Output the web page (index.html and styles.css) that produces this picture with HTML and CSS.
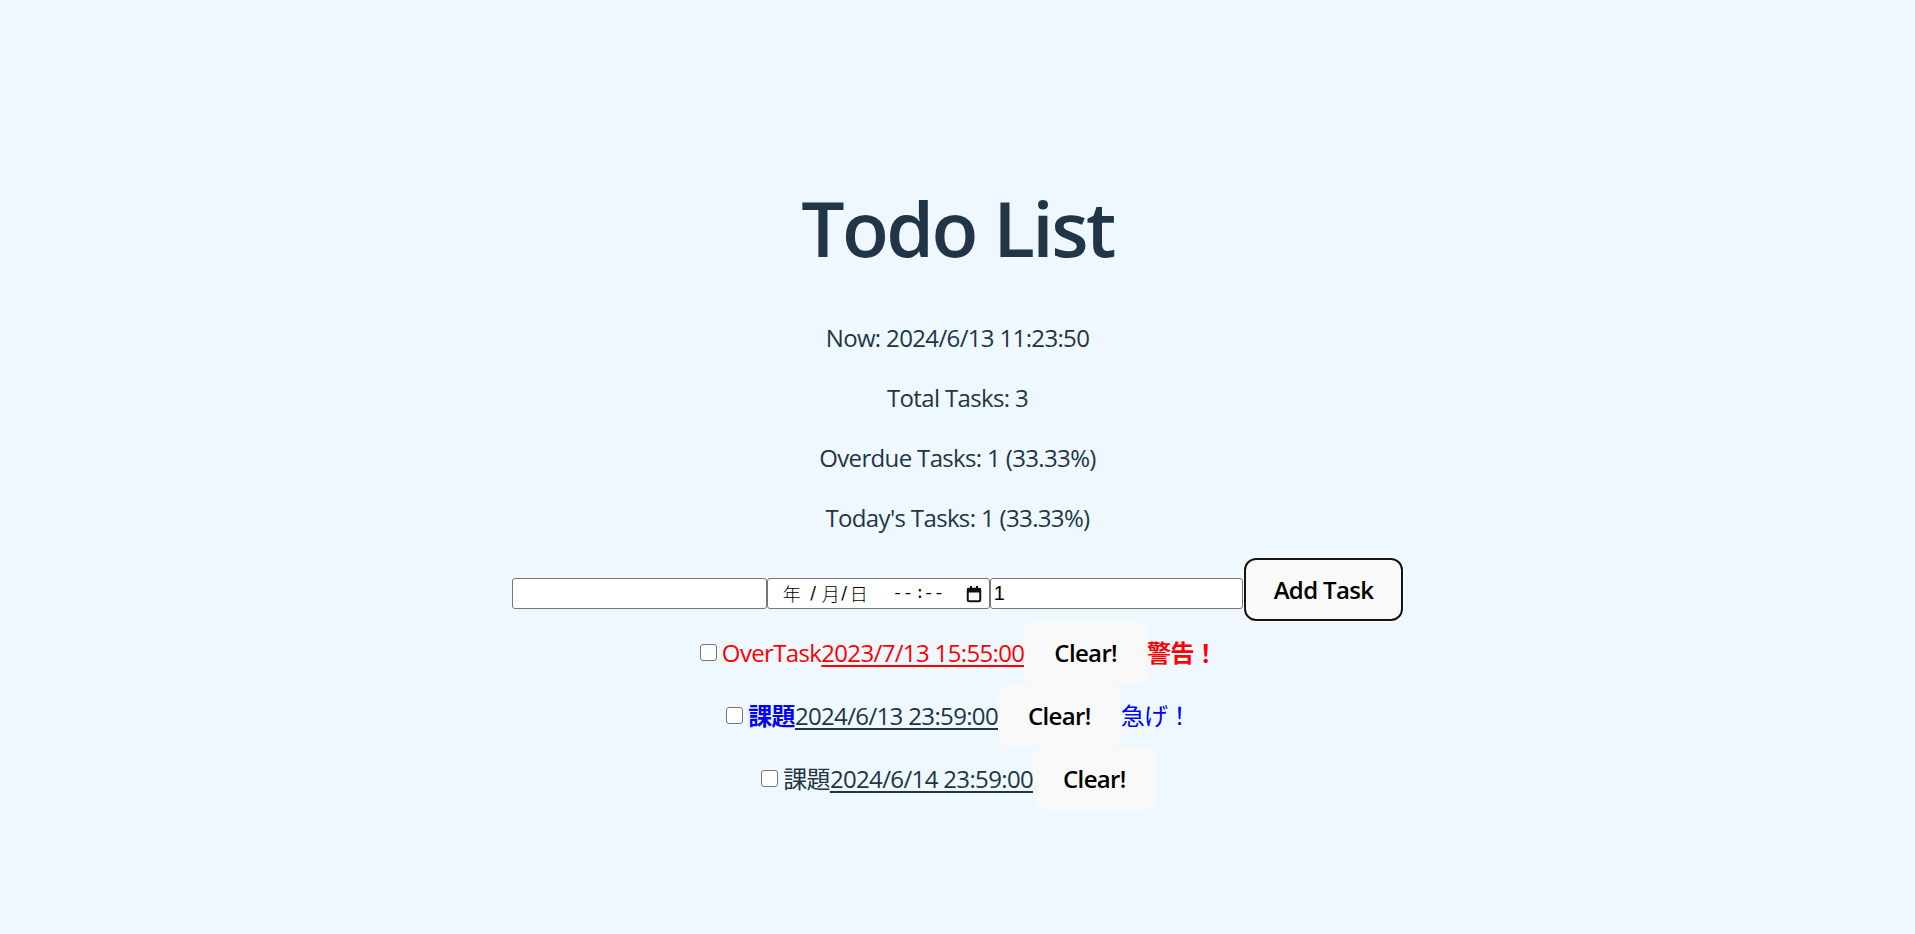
FILE: index.html
```html
<!DOCTYPE html>
<html lang="ja">
<head>
<meta charset="utf-8">
<title>Todo List</title>
<link rel="stylesheet" href="styles.css">
</head>
<body>
<div class="app">
  <h1 class="title">Todo List</h1>
  <p class="stat">Now: 2024/6/13 11:23:50</p>
  <p class="stat">Total Tasks: 3</p>
  <p class="stat">Overdue Tasks: 1 (33.33%)</p>
  <p class="stat">Today's Tasks: 1 (33.33%)</p>
  <div class="form-row">
    <input class="field field-text" type="text" value="">
    <div class="field field-date">
      <span class="seg seg-y">年</span><span class="seg seg-s1">/</span><span class="seg seg-m">月</span><span class="seg seg-s2">/</span><span class="seg seg-d">日</span><span class="seg seg-h">--</span><span class="seg seg-c">:</span><span class="seg seg-mi">--</span>
      <svg class="cal" width="16" height="18" viewBox="0 0 16 18"><rect x="1.75" y="3.75" width="12.5" height="12.5" rx="1.5" fill="none" stroke="#111" stroke-width="2"/><rect x="1" y="3" width="14" height="4.5" fill="#111"/><rect x="4" y="1" width="2" height="3" fill="#111"/><rect x="10" y="1" width="2" height="3" fill="#111"/></svg>
    </div>
    <input class="field field-num" type="text" value="1">
    <button class="btn btn-add" type="button">Add Task</button>
  </div>
  <div class="task-list">
    <div class="task task-over">
      <input class="check" type="checkbox">
      <span class="name">OverTask</span><span class="due">2023/7/13 15:55:00</span><button class="btn" type="button">Clear!</button><span class="note note-warn">警告！</span>
    </div>
    <div class="task task-today">
      <input class="check" type="checkbox">
      <span class="name name-bold">課題</span><span class="due">2024/6/13 23:59:00</span><button class="btn" type="button">Clear!</button><span class="note note-hurry">急げ！</span>
    </div>
    <div class="task task-later">
      <input class="check" type="checkbox">
      <span class="name">課題</span><span class="due">2024/6/14 23:59:00</span><button class="btn" type="button">Clear!</button>
    </div>
  </div>
</div>
</body>
</html>
```
FILE: styles.css
```css
html, body {
  margin: 0;
  padding: 0;
}
body {
  background: #f0f8ff;
  color: #213547;
  font-family: "Open Sans", "Noto Sans CJK JP", sans-serif;
  font-size: 24px;
  line-height: 36px;
  letter-spacing: -0.65px;
  min-height: 934px;
}
.app {
  text-align: center;
  padding-top: 186px;
}
.title {
  margin: 0 0 50px;
  font-size: 76.8px;
  line-height: 84px;
  font-weight: 600;
  letter-spacing: -2.6px;
}
.stat {
  margin: 0 0 24px;
}
.form-row {
  display: flex;
  justify-content: center;
  align-items: flex-start;
  height: 63px;
  margin-top: -2px;
}
.field {
  box-sizing: border-box;
  height: 31px;
  margin-top: 20px;
  border: 1px solid #767676;
  border-radius: 3px;
  background: #fff;
  font-family: "Liberation Sans", "Noto Sans CJK JP", sans-serif;
  font-size: 20px;
  letter-spacing: 0;
  color: #000;
  padding: 0 3px;
  outline: none;
}
.field-text {
  width: 255px;
}
.field-date {
  width: 223px;
  display: flex;
  align-items: center;
  padding: 0 7px 0 0;
  white-space: nowrap;
}
.seg {
  display: inline-block;
  flex: none;
  text-align: center;
  white-space: nowrap;
  font-family: "Noto Sans CJK JP", sans-serif;
  font-weight: 300;
  font-size: 18px;
  line-height: 29px;
  letter-spacing: 0;
  color: #000;
}
.seg-y { width: 18px; margin-left: 15px; }
.seg-s1 { width: 9px; margin-left: 8px; font-family: "DejaVu Sans", sans-serif; font-weight: 400; font-size: 17px; }
.seg-m { width: 18px; margin-left: 4px; }
.seg-s2 { width: 9px; margin-left: 0; font-family: "DejaVu Sans", sans-serif; font-weight: 400; font-size: 17px; }
.seg-d { width: 18px; margin-left: 1px; }
.seg-h { width: 22px; margin-left: 24px; font-family: "Liberation Mono", monospace; font-weight: 400; font-size: 17px; }
.seg-c { width: 6px; margin-left: 1px; font-family: "Liberation Mono", monospace; font-weight: 400; font-size: 17px; }
.seg-mi { width: 22px; margin-left: 2px; font-family: "Liberation Mono", monospace; font-weight: 400; font-size: 17px; }
.cal {
  display: block;
  flex: none;
  margin-left: auto;
}
.field-num {
  width: 253px;
}
.btn {
  box-sizing: border-box;
  height: 63px;
  padding: 0 29px;
  border: 1.5px solid transparent;
  border-radius: 12px;
  background: #f9f9f9;
  color: #000;
  font-family: "Open Sans", "Noto Sans CJK JP", sans-serif;
  font-size: 24px;
  font-weight: 600;
  letter-spacing: -0.65px;
  line-height: 30px;
  cursor: pointer;
}
.btn-add {
  margin-left: 1px;
  padding: 0 28px;
  border: 2.5px solid #151515;
  box-shadow: 0 0 0 1px #fff;
}
.task-list {
  display: flex;
  flex-direction: column;
}
.task {
  display: flex;
  justify-content: center;
  align-items: center;
  height: 63px;
  padding-right: 4px;
  white-space: nowrap;
}
.check {
  appearance: none;
  -webkit-appearance: none;
  box-sizing: border-box;
  width: 17px;
  height: 17px;
  margin: 0 5px 0 6px;
  border: 1.5px solid #767676;
  border-radius: 3px;
  background: #fff;
}
.due {
  text-decoration: underline;
  text-decoration-thickness: 2px;
  text-underline-offset: 3px;
}
.task-over {
  color: #ff0000;
}
.name-bold {
  font-weight: 700;
  color: #0000ff;
}
.note-warn {
  font-weight: 700;
  color: #ff0000;
}
.note-hurry {
  color: #0000ff;
}
```
